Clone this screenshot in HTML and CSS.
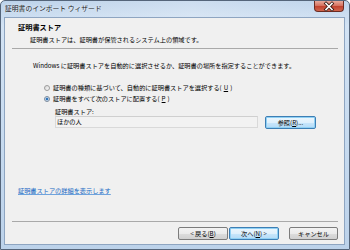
FILE: index.html
```html
<!DOCTYPE html>
<html lang="ja">
<head>
    <meta charset="UTF-8">
    <title>証明書のインポート ウィザード</title>
    <link rel="stylesheet" href="styles.css">
</head>
<body>
    <div class="window">
        <div class="titlebar">
            <span class="title">証明書のインポート ウィザード</span>
            <div class="close-btn">
                <svg width="30" height="11" viewBox="0 0 30 11">
                    <path d="M12 2.5 L18 8.5 M18 2.5 L12 8.5" stroke="#3b1a14" stroke-width="3.2" stroke-linecap="square"/>
                    <path d="M12 2.5 L18 8.5 M18 2.5 L12 8.5" stroke="#ffffff" stroke-width="1.6" stroke-linecap="square"/>
                </svg>
            </div>
        </div>

        <div class="client">
            <div class="header">
                <h1>証明書ストア</h1>
                <p>証明書ストアは、証明書が保管されるシステム上の領域です。</p>
            </div>
            <div class="sep"></div>

            <div class="page">
                <p class="intro">Windows に証明書ストアを自動的に選択させるか、証明書の場所を指定することができます。</p>

                <div class="options">
                    <div class="option"><span class="radio"></span>証明書の種類に基づいて、自動的に証明書ストアを選択する(<u>U</u>)</div>
                    <div class="option"><span class="radio checked"></span>証明書をすべて次のストアに配置する(<u>P</u>)</div>
                </div>

                <div class="store">
                    <div class="store-label">証明書ストア:</div>
                    <div class="store-row">
                        <div class="field">ほかの人</div>
                        <div class="btn btn-focus browse">参照(<u>R</u>)...</div>
                    </div>
                </div>

                <a class="more-link">証明書ストアの詳細を表示します</a>
            </div>

            <div class="footer">
                <div class="sep"></div>
                <div class="buttons">
                    <div class="btn">&lt; 戻る(<u>B</u>)</div>
                    <div class="btn btn-focus">次へ(<u>N</u>) &gt;</div>
                    <div class="btn cancel">キャンセル</div>
                </div>
            </div>
        </div>
    </div>
</body>
</html>
```

FILE: styles.css
```css
* {
    margin: 0;
    padding: 0;
    box-sizing: border-box;
}

body {
    font-family: "Noto Sans CJK JP", "Noto Sans", sans-serif;
    background: #ffffff;
    color: #000;
}

.window {
    width: 350px;
    height: 250px;
    display: flex;
    flex-direction: column;
    border: 1px solid #55657a;
    border-radius: 5px 5px 0 0;
    background: linear-gradient(180deg, #bcd2ea 0%, #d3e3f4 10%, #c6daef 60%, #bcd2ea 100%);
}

/* title bar */
.titlebar {
    height: 16px;
    display: flex;
    justify-content: space-between;
    align-items: flex-start;
    padding: 0 5px 0 4px;
    background: linear-gradient(90deg, rgba(255,255,255,0) 0%, rgba(255,255,255,0.25) 55%, rgba(255,255,255,0.05) 100%);
}

.title {
    font-size: 6.8px;
    line-height: 14px;
    color: #1a1a1a;
    text-shadow: 0 0 3px rgba(255, 255, 255, 0.9);
}

.close-btn {
    width: 30px;
    height: 11px;
    border: 1px solid #6b2b22;
    border-top: none;
    border-radius: 0 0 4px 4px;
    background: linear-gradient(180deg, #e9a99b 0%, #d67462 45%, #c24330 55%, #d0654d 100%);
    display: flex;
    align-items: center;
    justify-content: center;
    overflow: hidden;
}

.close-btn svg {
    display: block;
    flex-shrink: 0;
}

/* client area */
.client {
    flex: 1;
    margin: 0 4px 4px 3px;
    border: 1px solid #8ea5c1;
    background: #f0f0f0;
    display: flex;
    flex-direction: column;
}

.header {
    padding: 5px 0 4px 13px;
}

.header h1 {
    font-size: 7.2px;
    font-weight: bold;
    line-height: 9px;
}

.header p {
    font-size: 6.2px;
    line-height: 9px;
    margin: 3px 0 0 12px;
}

.sep {
    height: 1px;
    background: #a9a9a9;
    margin: 0 6px 0 7px;
}

.page {
    font-size: 6.2px;
    line-height: 9px;
}

.intro {
    margin: 12px 0 0 28px;
}

.options {
    margin: 12px 0 0 39px;
}

.option {
    height: 11px;
    display: flex;
    align-items: center;
    gap: 2px;
}

.radio {
    width: 6px;
    height: 6px;
    border: 1px solid #9c9c9c;
    border-radius: 50%;
    background: linear-gradient(135deg, #d6d6d6, #fbfbfb);
    margin-right: 1px;
}

.radio.checked {
    border-color: #7a8a9c;
    background: radial-gradient(circle, #1c5a9c 0%, #3e8bd6 45%, #e2e9f1 60%);
}

.store {
    margin: 3px 0 0 50px;
}

.store-row {
    display: flex;
    gap: 7px;
    height: 12px;
}

.field {
    width: 203px;
    height: 12px;
    border: 1px solid #d9d9d9;
    border-top-color: #cfcfcf;
    background: #f2f2f2;
    padding-left: 1px;
    line-height: 10px;
}

.more-link {
    display: inline-block;
    margin: 58px 0 0 13px;
    color: #1769c4;
    text-decoration: underline;
    text-decoration-color: #6fa3dd;
}

/* buttons */
.btn {
    height: 13px;
    width: 50px;
    border: 1px solid #7c7c7c;
    border-radius: 2px;
    background: linear-gradient(180deg, #f3f3f3 0%, #ebebeb 50%, #dddddd 51%, #d0d0d0 100%);
    font-size: 6.2px;
    line-height: 11px;
    text-align: center;
}

.btn-focus {
    border-color: #3d7eb4;
    background: linear-gradient(180deg, #ecf6fd 0%, #dff0fc 50%, #c8e6fb 51%, #b4dbf7 100%);
    box-shadow: inset 0 0 0 1px #8fd0f4;
}

.browse {
    width: 51px;
}

.footer {
    margin-top: auto;
    padding-bottom: 4px;
}

.buttons {
    display: flex;
    justify-content: flex-end;
    gap: 1px;
    margin: 5px 6px 0 0;
}

.buttons .cancel {
    width: 49px;
    margin-left: 9px;
}
```
